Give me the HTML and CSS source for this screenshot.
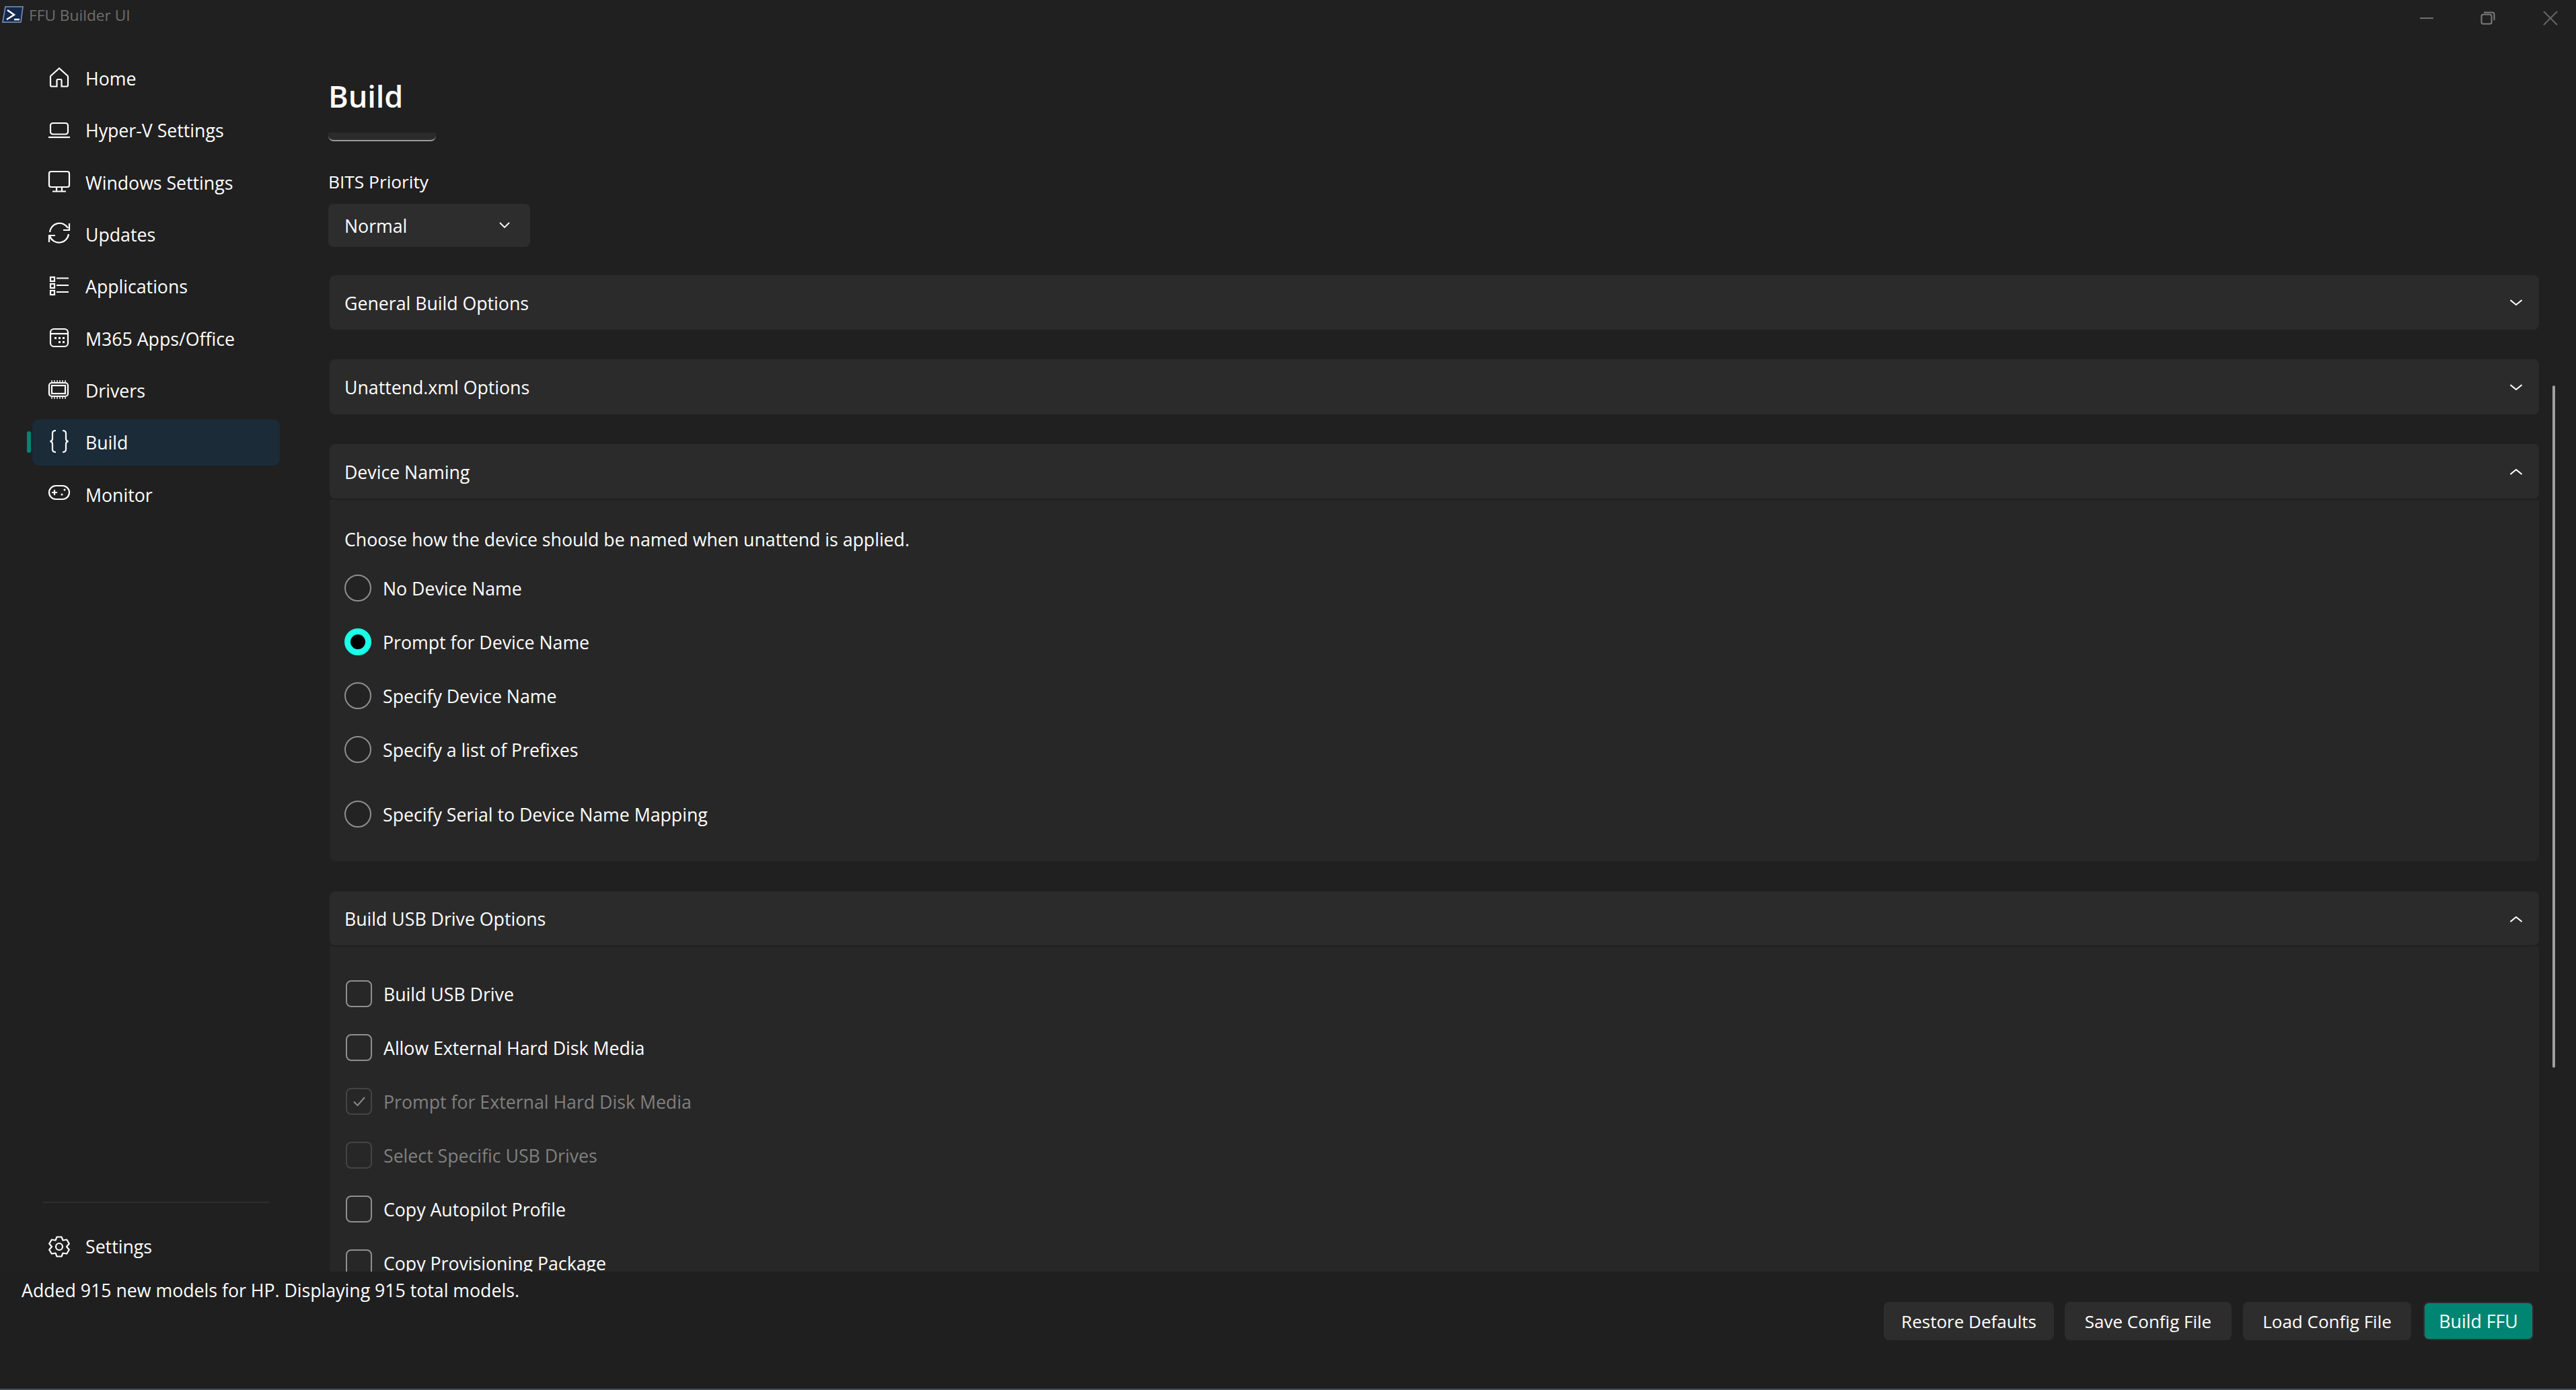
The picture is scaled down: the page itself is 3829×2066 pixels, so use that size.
FILE: index.html
```html
<!DOCTYPE html>
<html lang="en">
<head>
<meta charset="utf-8">
<title>FFU Builder UI</title>
<link rel="stylesheet" href="styles.css">
</head>
<body>
<div class="app">
  <header class="titlebar">
    <svg class="app-icon" viewBox="0 0 34 26"><path class="ps-bg" d="M7 1H33L30 24H3Z"/><path class="ps-fg" d="M10 6L20 13L9 20M20 20H28"/></svg>
    <span class="app-title">FFU Builder UI</span>
    <div class="win-controls">
      <svg class="win-btn" viewBox="0 0 20 20"><path d="M0 10H20"/></svg>
      <svg class="win-btn win-restore" viewBox="0 0 20 20"><rect x="0.5" y="4.5" width="15" height="14" rx="2.5"/><path d="M4 1.5H16.5Q19.5 1.5 19.5 4.5V13"/></svg>
      <svg class="win-btn win-close" viewBox="0 0 20 20"><path d="M0 0L20 20M20 0L0 20"/></svg>
    </div>
  </header>

  <div class="main">
    <nav class="nav">
      <ul class="nav-list">
        <li class="nav-item"><svg class="nav-icon" viewBox="0 0 32 32"><path d="M16 0.5L3.7 11.5Q3 12.2 3 13V25.5Q3 27.5 5 27.5H12.5V18.5Q12.5 17 14 17H18Q19.5 17 19.5 18.5V27.5H27Q29 27.5 29 25.5V13Q29 12.2 28.3 11.5Z"/></svg>Home</li>
        <li class="nav-item"><svg class="nav-icon" viewBox="0 0 32 32"><rect x="3" y="5" width="26" height="16.5" rx="3.5"/><path d="M0 26H32"/></svg>Hyper-V Settings</li>
        <li class="nav-item"><svg class="nav-icon" viewBox="0 0 32 32"><rect x="1" y="0" width="30" height="23" rx="3"/><path d="M12 23V29M20 23V29M6 29.5H26"/></svg>Windows Settings</li>
        <li class="nav-item"><svg class="nav-icon" viewBox="0 0 32 32"><path d="M2 13A14.5 14.5 0 0 1 29 7M31 0V10H22M1 28V18H10M2 19A14.5 14.5 0 0 0 30 16"/></svg>Updates</li>
        <li class="nav-item"><svg class="nav-icon" viewBox="0 0 32 32"><rect x="3" y="2" width="6" height="6"/><rect x="3" y="12" width="6" height="6"/><rect x="3" y="22" width="6" height="6"/><path d="M12 3.5H30M12 14H30M12 24H30"/></svg>Applications</li>
        <li class="nav-item"><svg class="nav-icon" viewBox="0 0 32 32"><rect x="3" y="2" width="26" height="26" rx="5"/><path d="M3 9H29"/><path class="icon-dots" d="M9 14h3v3H9zM15 14h3v3h-3zM21 14h3v3h-3zM15 20h3v3h-3zM21 20h3v3h-3z"/></svg>M365 Apps/Office</li>
        <li class="nav-item"><svg class="nav-icon" viewBox="0 0 32 32"><rect x="1" y="5" width="28" height="20" rx="4"/><rect x="5" y="9" width="20" height="12"/><path class="icon-teeth" d="M4 2.5H27M4 27.5H27"/></svg>Drivers</li>
        <li class="nav-item is-active"><span class="nav-marker"></span><svg class="nav-icon" viewBox="0 0 32 32"><path d="M11 -2Q6 -2 6 2V10Q6 13.5 2.5 14Q6 14.5 6 18V26Q6 30 11 30M21 -2Q26 -2 26 2V10Q26 13.5 29.5 14Q26 14.5 26 18V26Q26 30 21 30"/></svg>Build</li>
        <li class="nav-item"><svg class="nav-icon" viewBox="0 0 32 32"><rect x="1" y="3" width="30" height="20" rx="10"/><path d="M5 13H13M9 9V17"/><path class="icon-dots" d="M18.500 16a1.500 1.500 0 1 0 3 0a1.500 1.500 0 1 0-3 0M22.500 9a1.500 1.500 0 1 0 3 0a1.500 1.500 0 1 0-3 0"/></svg>Monitor</li>
      </ul>
      <div class="nav-divider"></div>
      <div class="nav-item nav-settings"><svg class="nav-icon" viewBox="0 0 32 32"><path class="gear" d="M12.500 1.500H19.500L21.500 6.500L27.200 5.500L30.800 11.500L27 16L30.800 20.500L27.200 26.500L21.500 25.500L19.500 30.500H12.500L10.500 25.500L4.800 26.500L1.200 20.500L5 16L1.200 11.500L4.800 5.500L10.500 6.500Z"/><circle cx="16" cy="16" r="5"/></svg>Settings</div>
    </nav>

    <section class="content">
      <h1 class="page-title">Build</h1>
      <div class="scroller">
        <div class="clipped-input"></div>
        <label class="field-label">BITS Priority</label>
        <div class="dropdown"><span>Normal</span><svg class="chev-small" viewBox="0 0 16 10"><path d="M1 1L8 8L15 1"/></svg></div>

        <div class="card card-first"><span>General Build Options</span><svg class="chev" viewBox="0 0 18 10"><path d="M0.500 1L9 8L17.500 1"/></svg></div>
        <div class="card card-tall"><span>Unattend.xml Options</span><svg class="chev" viewBox="0 0 18 10"><path d="M0.500 1L9 8L17.500 1"/></svg></div>

        <div class="card"><span>Device Naming</span><svg class="chev" viewBox="0 0 18 10"><path d="M0.500 9L9 2L17.500 9"/></svg></div>
        <div class="panel panel-radios">
          <p class="panel-intro">Choose how the device should be named when unattend is applied.</p>
          <div class="option"><span class="radio"></span>No Device Name</div>
          <div class="option"><span class="radio is-on"></span>Prompt for Device Name</div>
          <div class="option"><span class="radio"></span>Specify Device Name</div>
          <div class="option"><span class="radio"></span>Specify a list of Prefixes</div>
          <div class="option option-last"><span class="radio"></span>Specify Serial to Device Name Mapping</div>
        </div>

        <div class="card card-next"><span>Build USB Drive Options</span><svg class="chev" viewBox="0 0 18 10"><path d="M0.500 9L9 2L17.500 9"/></svg></div>
        <div class="panel panel-checks">
          <div class="option"><span class="check"></span>Build USB Drive</div>
          <div class="option"><span class="check"></span>Allow External Hard Disk Media</div>
          <div class="option is-disabled"><span class="check"><svg viewBox="0 0 20 16"><path d="M2 8.500L7.500 14L18 2"/></svg></span>Prompt for External Hard Disk Media</div>
          <div class="option is-disabled"><span class="check"></span>Select Specific USB Drives</div>
          <div class="option"><span class="check"></span>Copy Autopilot Profile</div>
          <div class="option"><span class="check"></span>Copy Provisioning Package</div>
        </div>
      </div>
      <div class="scrollbar"></div>
    </section>
  </div>

  <footer class="footer">
    <div class="status">Added 915 new models for HP. Displaying 915 total models.</div>
    <div class="actions">
      <button class="btn btn-restore">Restore Defaults</button>
      <button class="btn btn-save">Save Config File</button>
      <button class="btn btn-load">Load Config File</button>
      <button class="btn btn-primary">Build FFU</button>
    </div>
  </footer>
</div>
</body>
</html>
```

FILE: styles.css
```css
* { box-sizing: border-box; }
html, body { margin: 0; height: 100%; }
body {
  background: #202020;
  color: #fff;
  font-family: "Open Sans", "Noto Sans", "Liberation Sans", sans-serif;
  font-size: 26.700px;
  overflow: hidden;
}
.app { display: flex; flex-direction: column; height: 2066px; }

.titlebar { height: 46px; flex: none; display: flex; align-items: flex-start; position: relative; }
.app-icon { width: 34px; height: 26px; margin: 9px 0 0 1px; flex: none; }
.ps-bg { fill: #14294f; stroke: #7d97bb; stroke-width: 1.500; }
.ps-fg { fill: none; stroke: #fff; stroke-width: 2.500; }
.app-title { margin: 3px 0 0 8px; font-size: 22.700px; line-height: 40px; color: #6e6e6e; }
.win-controls { margin-left: auto; display: flex; gap: 72px; padding: 17px 28px 0 0; }
.win-btn { width: 20px; height: 20px; fill: none; stroke: #6f6f6f; stroke-width: 2; overflow: visible; }
.win-restore { margin: 0 1px 0 -1px; stroke: #7c7c7c; }
.win-close { stroke: #666; }

.main { flex: 1; min-height: 0; display: flex; }

.nav { width: 488px; flex: none; display: flex; flex-direction: column; padding-top: 36px; padding-bottom: 3px; }
.nav-list { list-style: none; margin: 0; padding: 0; flex: 1; display: flex; flex-direction: column; gap: 8.330px; }
.nav-item { position: relative; height: 69px; margin-left: 48px; width: 368px; padding-left: 24px; display: flex; align-items: center; gap: 23px; border-radius: 10px; flex: none; }
.nav-item.is-active { background: #1b2b38; }
.nav-marker { position: absolute; left: -8px; top: 18px; width: 6px; height: 32px; border-radius: 3px; background: #008573; }
.nav-icon { width: 32px; height: 32px; flex: none; fill: none; stroke: #fff; stroke-width: 2.200; overflow: visible; }
.gear { stroke-linejoin: round; }
.icon-dots { fill: #fff; stroke: none; }
.icon-teeth { stroke-dasharray: 2 2; }
.nav-divider { height: 2px; margin: 0 88px 30px 64px; background: #2e2e2e; flex: none; }

.content { position: relative; flex: 1; min-width: 0; display: flex; flex-direction: column; }
.page-title { margin: 0; height: 151px; padding: 65px 0 0 0; font-size: 45px; line-height: 64px; font-weight: 600; flex: none; }
.scroller { flex: 1; min-height: 0; overflow: hidden; padding-right: 55px; }
.scrollbar { position: absolute; left: 3306px; top: 527px; width: 4px; height: 1014px; border-radius: 2px; background: #9f9f9f; }

.clipped-input { width: 160px; height: 13px; background: #2b2b2b; border-bottom: 2px solid #9a9a9a; border-radius: 0 0 8px 8px; }
.field-label { display: block; margin-top: 40px; line-height: 40px; padding-left: 0; font-size: 26.300px; }
.dropdown { margin-top: 13px; width: 300px; height: 64px; display: flex; align-items: center; justify-content: space-between; padding: 0 30px 0 24px; background: #2d2d2d; border-radius: 8px; }
.chev-small { width: 16px; height: 10px; fill: none; stroke: #fff; stroke-width: 1.800; }

.card { margin-left: 2px; height: 81px; display: flex; align-items: center; justify-content: space-between; padding: 1px 25px 0 22px; background: #2b2b2b; border-radius: 8px; }
.card-first { margin-top: 42px; }
.card-tall { margin-top: 44px; height: 82px; }
.card-tall + .card { margin-top: 44px; }
.card-next { margin-top: 45px; height: 80px; }
.chev { width: 18px; height: 10px; fill: none; stroke: #fff; stroke-width: 2; }

.panel { margin: 2px 0 0 2px; background: #272727; border-radius: 0 0 8px 8px; display: flex; flex-direction: column; gap: 40px; }
.panel-radios { padding: 39px 22px 50px; }
.panel-intro { margin: 0 0 -8px; line-height: 40px; }
.panel-checks { padding: 50px 24px 50px; }
.option { height: 40px; display: flex; align-items: center; gap: 17px; flex: none; }
.option-last { margin-top: 16px; }
.radio { width: 40px; height: 40px; border-radius: 50%; border: 2px solid #8f8f8f; background: #232323; flex: none; }
.radio.is-on { border: 9px solid #19ffe8; background: #000; }
.check { width: 39px; height: 40px; border-radius: 8px; border: 2px solid #8f8f8f; background: #272727; flex: none; display: flex; align-items: center; justify-content: center; }
.check svg { width: 20px; height: 16px; fill: none; stroke: #8a8a8a; stroke-width: 2; }
.is-disabled { color: #808080; }
.is-disabled .check { border-color: #444; }

.footer { height: 176px; flex: none; display: flex; justify-content: space-between; align-items: flex-start; padding: 8px 63px 0 32px; border-bottom: 2px solid #45505c; background: #1f1f1f; }
.status { line-height: 40px; }
.actions { display: flex; gap: 16px; margin-top: 37px; }
.btn { height: 57px; padding: 0; font: inherit; font-size: 26px; color: #fff; background: #2d2d2d; border: 0; border-radius: 8px; }
.btn-restore { width: 253px; }
.btn-save { width: 248px; }
.btn-load { width: 250px; margin-left: 1px; }
.btn-primary { width: 164px; margin-left: 2px; background: #008573; border: 2px solid #2d2d2d; font-size: 26.700px; }
```
